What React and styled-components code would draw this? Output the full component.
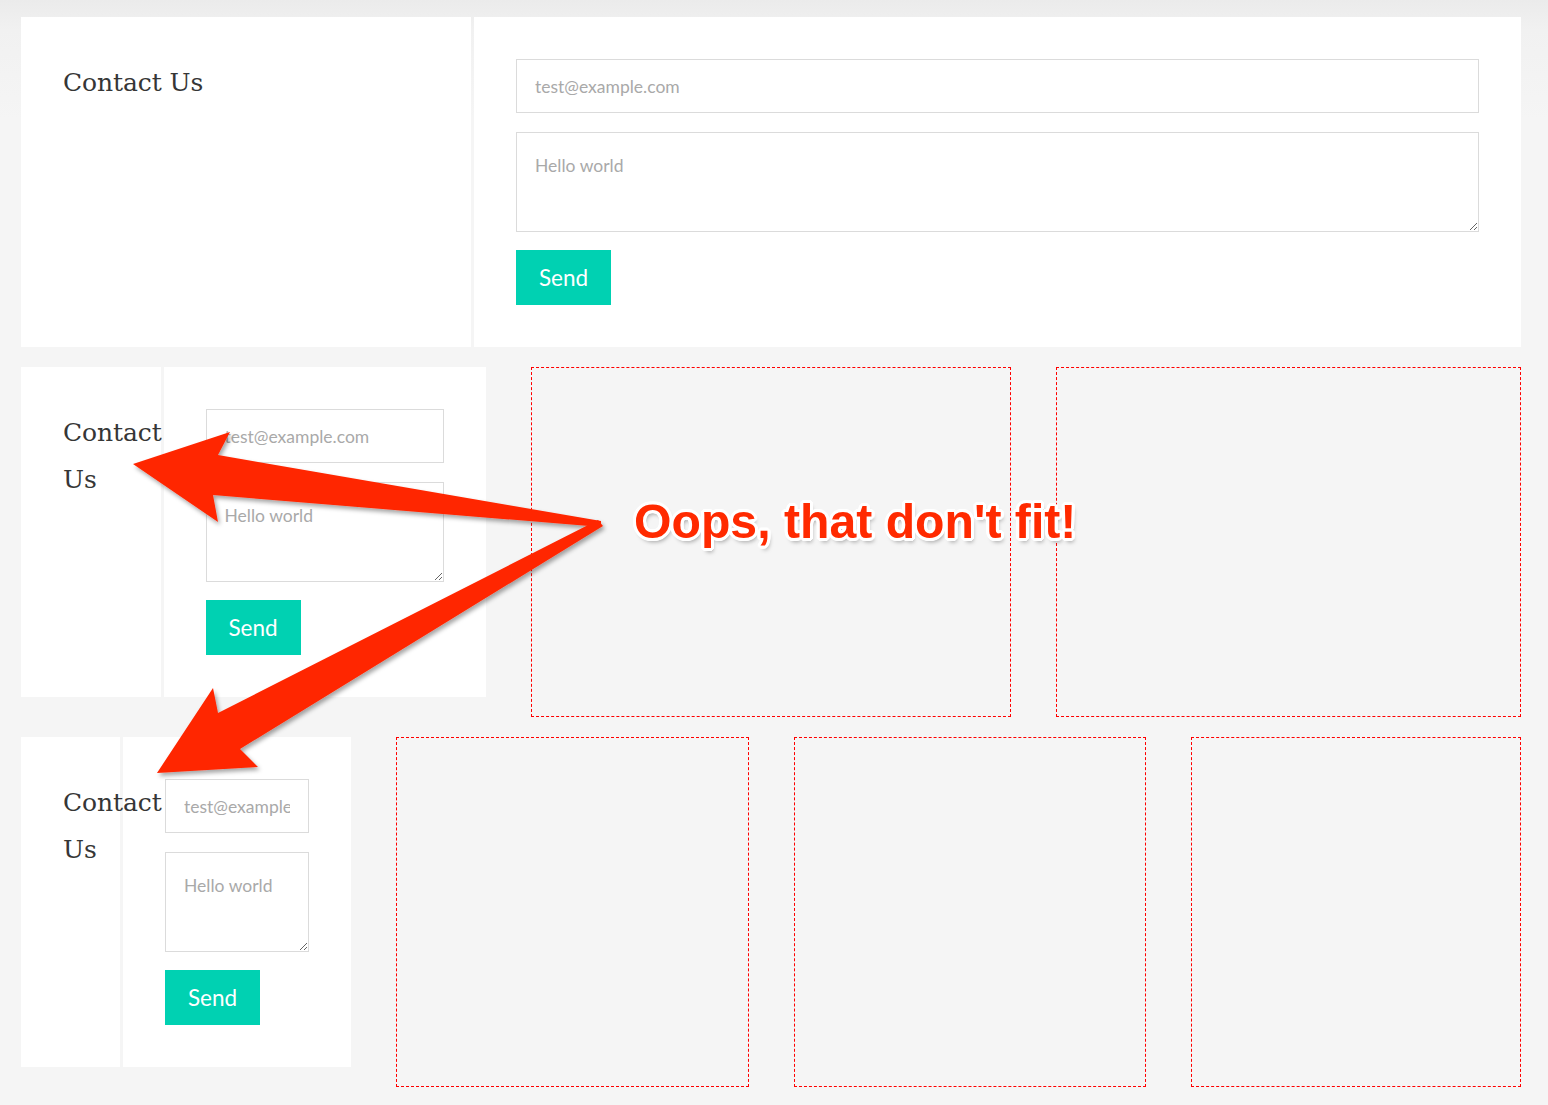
import React from "react";
import styled, { createGlobalStyle } from "styled-components";

const Global = createGlobalStyle`
  html, body { margin: 0; padding: 0; }
  body {
    background: #f5f5f5;
    background-image: linear-gradient(to bottom, #ebebeb 0px, #f1f1f1 30px, #f5f5f5 120px);
    font-family: "Lato", "Liberation Sans", sans-serif;
  }
`;

const Page = styled.div`
  position: relative;
  width: 1548px;
  height: 1105px;
  box-sizing: border-box;
  padding: 17px 0 0 21px;
  overflow: hidden;
`;

const Stack = styled.div`
  width: 1500px;
  display: flex;
  flex-direction: column;
  gap: 20px;
`;

const Row = styled.div`
  display: flex;
  gap: 45px;
  align-items: flex-start;
`;

const Card = styled.div`
  width: ${(p) => p.$w}px;
  flex: none;
  display: flex;
  gap: 3px;
`;

const Side = styled.div`
  width: 30%;
  flex: none;
  background: #fff;
  box-sizing: border-box;
  padding: 42px;
  align-self: stretch;
`;

const Title = styled.h1`
  position: relative;
  z-index: 1;
  margin: 0;
  font-family: "DejaVu Serif", "Liberation Serif", serif;
  font-weight: 400;
  font-size: 25px;
  line-height: 47px;
  color: #363636;
  letter-spacing: -0.1px;
`;

const Main = styled.div`
  flex: 1;
  min-width: 0;
  background: #fff;
  box-sizing: border-box;
  padding: 42px;
  display: flex;
  flex-direction: column;
  align-items: flex-start;
`;

const fieldBase = `
  display: block;
  width: 100%;
  box-sizing: border-box;
  border: 1px solid #dbdbdb;
  border-radius: 0;
  background: #fff;
  font-family: "Lato", "Liberation Sans", sans-serif;
  font-size: 17.5px;
  color: #363636;
  outline: none;
  &::placeholder { color: #a9a9a9; opacity: 1; }
`;

const Input = styled.input`
  ${fieldBase}
  height: 54px;
  padding: 0 18px;
`;

const Area = styled.textarea`
  ${fieldBase}
  height: 100px;
  margin-top: 19px;
  padding: 20px 18px 10px;
  line-height: 1.5;
`;

const SendButton = styled.button`
  margin-top: 18px;
  height: 55px;
  width: 95px;
  border: none;
  border-radius: 0;
  background: #00d1b2;
  color: #fff;
  font-family: "Lato", "Liberation Sans", sans-serif;
  font-size: 22.5px;
  padding: 0;
  cursor: pointer;
`;

const Slot = styled.div`
  width: ${(p) => p.$w}px;
  height: 350px;
  flex: none;
  box-sizing: border-box;
  border: 1px dashed #ff0000;
`;

const Overlay = styled.svg`
  position: absolute;
  left: 0;
  top: 0;
  z-index: 2;
  pointer-events: none;
`;

const Callout = styled.div`
  position: absolute;
  z-index: 3;
  left: 634px;
  top: 497px;
  font-family: "Liberation Sans", Arial, sans-serif;
  font-weight: 700;
  font-size: 48.2px;
  line-height: 1;
  white-space: nowrap;
  color: #ff2a00;
  text-shadow:
    3px 0 0 #fff, -3px 0 0 #fff, 0 3px 0 #fff, 0 -3px 0 #fff,
    2px 2px 0 #fff, -2px 2px 0 #fff, 2px -2px 0 #fff, -2px -2px 0 #fff,
    3px 1px 0 #fff, -3px 1px 0 #fff, 3px -1px 0 #fff, -3px -1px 0 #fff,
    1px 3px 0 #fff, -1px 3px 0 #fff, 1px -3px 0 #fff, -1px -3px 0 #fff,
    2px 4px 4px rgba(0, 0, 0, 0.35);
`;

function ContactCard({ w }) {
  return (
    <Card $w={w}>
      <Side>
        <Title>Contact Us</Title>
      </Side>
      <Main>
        <Input type="email" placeholder="test@example.com" />
        <Area placeholder="Hello world" />
        <SendButton type="button">Send</SendButton>
      </Main>
    </Card>
  );
}

export default function App() {
  return (
    <>
      <Global />
      <Page>
        <Stack>
          <Row>
            <ContactCard w={1500} />
          </Row>
          <Row>
            <ContactCard w={465} />
            <Slot $w={480} />
            <Slot $w={465} />
          </Row>
          <Row>
            <ContactCard w={330} />
            <Slot $w={353} />
            <Slot $w={352} />
            <Slot $w={330} />
          </Row>
        </Stack>
        <Overlay width="1548" height="1105" viewBox="0 0 1548 1105">
          <defs>
            <filter id="sh" x="-10%" y="-10%" width="120%" height="130%">
              <feDropShadow dx="2" dy="3" stdDeviation="2" floodColor="#000" floodOpacity="0.35" />
            </filter>
          </defs>
          <g fill="#ff2600" filter="url(#sh)">
            <polygon points="601,521 218,455 230,432 133,464 218,522 213,495 601,527" />
            <polygon points="598,520 218,713 213,688 157,773 258,767 240,749 603,526" />
          </g>
        </Overlay>
        <Callout>Oops, that don't fit!</Callout>
      </Page>
    </>
  );
}
